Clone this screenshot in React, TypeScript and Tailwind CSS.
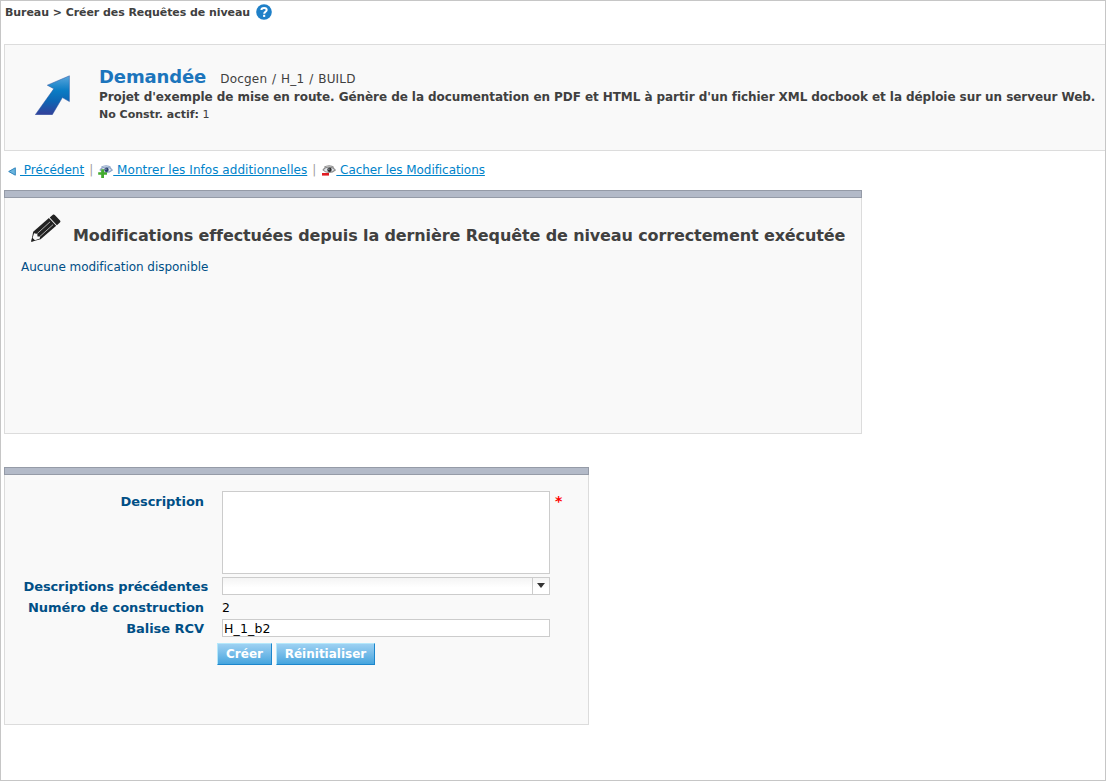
import type { ReactNode } from 'react';

function Panel({ className, children }: { className: string; children: ReactNode }) {
  return (
    <section className={`flex flex-col border border-[#dcdcdc] bg-[#f9f9f9] ${className}`}>
      <div className="-mx-px -mt-px h-2 shrink-0 border border-[#959ba7] bg-[#b3bac8]" />
      {children}
    </section>
  );
}

function HelpIcon() {
  return (
    <svg className="h-4 w-4" viewBox="0 0 16 16">
      <circle cx="8" cy="8" r="7.8" fill="#1f80c8" />
      <path d="M5.4 6.1C5.4 4.5 6.5 3.9 8.1 3.9s2.6.8 2.6 2c0 1.8-2.5 1.8-2.5 3.8" fill="none" stroke="#fff" strokeWidth="2" />
      <rect x="7.1" y="10.8" width="2.1" height="2.1" fill="#fff" />
    </svg>
  );
}

function ArrowIcon() {
  return (
    <svg className="h-10 w-[35px]" viewBox="0 0 35 40">
      <defs>
        <linearGradient id="arrow" x1="0" y1="0" x2="0" y2="1">
          <stop offset="0" stopColor="#5aa6dc" />
          <stop offset=".38" stopColor="#0a7cc4" />
          <stop offset=".65" stopColor="#0d66b4" />
          <stop offset="1" stopColor="#35409a" />
        </linearGradient>
      </defs>
      <path d="M34.4.8 12.3 10.2l6.5 3.6L.3 39.7h17L27.4 22.6l7 4z" fill="url(#arrow)" stroke="#2c54a0" strokeWidth=".5" />
    </svg>
  );
}

function EyeIcon({ kind }: { kind: 'plus' | 'minus' }) {
  const tone = kind === 'plus' ? '#8fa6c8' : '#8c8c8c';
  const pupil = kind === 'plus' ? '#27406e' : '#2d2d2d';
  return (
    <svg className="mt-[2px] h-[15px] w-[15px] shrink-0" viewBox="0 0 15 15">
      <path d="M2 7C4.5 3 11 3 14.3 7 11 10.3 5 10.3 2 7Z" fill="#e1e5eb" stroke={tone} strokeWidth="1.1" />
      <path d="M3.3 4.3C6 2.2 10.5 2.2 12.8 4.5" fill="none" stroke={tone} strokeWidth="1.1" />
      <circle cx="8.5" cy="6.7" r="2.2" fill={pupil} />
      <circle cx="7.9" cy="6.1" r=".7" fill="#b8c5d8" />
      {kind === 'plus' ? (
        <path d="M3.2 6.2h2.8v3h3v2.6H6V15H3.2v-3.2H.2V9.2h3z" fill="#43ab2e" />
      ) : (
        <rect x="1" y="10" width="7" height="2.6" fill="#e01b22" />
      )}
    </svg>
  );
}

function PencilIcon() {
  return (
    <svg className="h-[29px] w-[31px] shrink-0" viewBox="0 0 31 29">
      <path d="M19.7 3.4 22.6.9c.8-.6 1.6-.5 2.2.1l5.2 5.4c.6.7.6 1.5-.1 2.1l-3 2.7z" fill="#222" />
      <path d="M18.9 4.1 26.2 11.8 10.6 25.3 1.2 27.8 3.2 17.7z" fill="#222" />
      <path d="M4.2 18.7 2.6 24l2.3 2.2 5-1.8.1-1.8-2.5-.2-.2-2.6-2.8-.2z" fill="#f9f9f9" />
      <path d="M7.4 19.4 20.1 7.8M10 22.4 23.1 10.6" stroke="#f9f9f9" strokeWidth=".65" />
      <path d="M1.2 27.8 2.1 24l3 2.7z" fill="#222" />
    </svg>
  );
}

const label = 'text-right text-[13px] leading-[21px] font-bold text-[#004f86]';
const button =
  'h-[22px] border border-t-[#b5e8fb] border-l-[#b5e8fb] border-r-[#1c86cc] border-b-[#1c86cc] bg-linear-to-b from-[#9dd1f2] to-[#45a5de] text-center text-[12px] leading-[21px] font-bold text-white';

export default function App() {
  return (
    <main className="flex h-[781px] w-[1106px] flex-col overflow-hidden border border-[#c6c6c6] bg-white pl-[3px] font-['DejaVu_Sans',sans-serif] whitespace-nowrap text-[#404040]">
      <nav className="flex h-[43px] shrink-0 items-start gap-[6px] pt-[3px] pl-px">
        <span className="pt-px text-[11px] leading-4 font-bold tracking-[-0.065px]">Bureau &gt; Créer des Requêtes de niveau</span>
        <HelpIcon />
      </nav>

      <header className="flex h-[107px] shrink-0 border border-r-0 border-[#dcdcdc] bg-[#f9f9f9] pt-[30px] pl-[30px]">
        <ArrowIcon />
        <div className="ml-[29px] flex flex-col items-start">
          <div className="-mt-[9px] flex items-baseline gap-[14px]">
            <h1 className="text-[18px] leading-[22px] font-bold tracking-[-0.12px] text-[#1c75bc]">Demandée</h1>
            <span className="text-[12px] tracking-[0.2px] [word-spacing:0.8px]">Docgen / H_1 / BUILD</span>
          </div>
          <p className="text-[12px] leading-[18px] font-bold tracking-[-0.068px]">
            Projet d'exemple de mise en route. Génère de la documentation en PDF et HTML à partir d'un fichier XML docbook et la déploie sur un serveur Web.
          </p>
          <p className="text-[11px] leading-[17px]"><b>No Constr. actif:</b> 1</p>
        </div>
      </header>

      <nav className="flex h-[39px] shrink-0 items-start pt-[10px] pl-1 text-[12px] leading-[18px] text-[#0083ca]">
        <svg className="mt-[6px] h-[9px] w-2" viewBox="0 0 8 9"><path d="M7.3.8v7.4L.7 4.5z" fill="#6bb5de" stroke="#3185bd" /></svg>
        <a className="ml-1 underline whitespace-pre" href="#precedent"> Précédent</a>
        <span className="mx-[5px] text-[#a0a0a0]">|</span>
        <EyeIcon kind="plus" />
        <a className="tracking-[0.05px] underline whitespace-pre" href="#infos"> Montrer les Infos additionnelles</a>
        <span className="mx-[5px] text-[#a0a0a0]">|</span>
        <EyeIcon kind="minus" />
        <a className="tracking-[-0.06px] underline whitespace-pre" href="#modifications"> Cacher les Modifications</a>
      </nav>

      <Panel className="h-[244px] w-[858px] shrink-0">
        <div className="flex pt-[16px] pl-[25px]">
          <PencilIcon />
          <h2 className="ml-3 pt-[10px] text-[16px] leading-[24px] font-bold tracking-[-0.12px]">Modifications effectuées depuis la dernière Requête de niveau correctement exécutée</h2>
        </div>
        <p className="mt-[10px] pl-4 text-[12px] leading-[18px] tracking-[-0.04px] text-[#004f86]">Aucune modification disponible</p>
      </Panel>

      <Panel className="mt-[33px] h-[258px] w-[585px] shrink-0">
        <form className="grid grid-cols-[199px_328px_1fr] grid-rows-[83px_21px_21px_21px] gap-x-[18px] pt-4">
          <label className={`${label} tracking-[-0.05px]`}>Description</label>
          <textarea className="h-[83px] w-full resize-none border border-[#cccccc] bg-white outline-none" />
          <span className="-ml-[13px] text-[14px] leading-[20px] font-bold text-[#ff0000]">*</span>
          <label className={`${label} -mr-1 pt-[2px] tracking-[-0.13px]`}>Descriptions précédentes</label>
          <div className="mt-[3px] flex h-[18px] border border-[#cccccc] bg-linear-to-b from-[#f4f4f4] to-white to-60%">
            <div className="flex-1" />
            <div className="flex w-[17px] justify-center border-l border-[#cccccc] pt-[5px]">
              <svg className="h-[5px] w-2" viewBox="0 0 8 5"><path d="M0 0h8L4 5z" fill="#333" /></svg>
            </div>
          </div>
          <label className={`${label} col-start-1 pt-[2px] tracking-[-0.05px]`}>Numéro de construction</label>
          <span className="pt-[2px] text-[12.5px] leading-[21px] text-black">2</span>
          <label className={`${label} col-start-1 pt-[2px] tracking-[-0.05px]`}>Balise RCV</label>
          <input className="mt-[3px] h-[18px] w-full border border-[#cccccc] bg-white px-px text-[12.5px] leading-4 tracking-[0.15px] text-black outline-none" defaultValue="H_1_b2" />
        </form>
        <div className="flex gap-1 pt-[6px] pl-[212px]">
          <button className={`${button} w-[55px]`}>Créer</button>
          <button className={`${button} w-[99px]`}>Réinitialiser</button>
        </div>
      </Panel>
    </main>
  );
}
